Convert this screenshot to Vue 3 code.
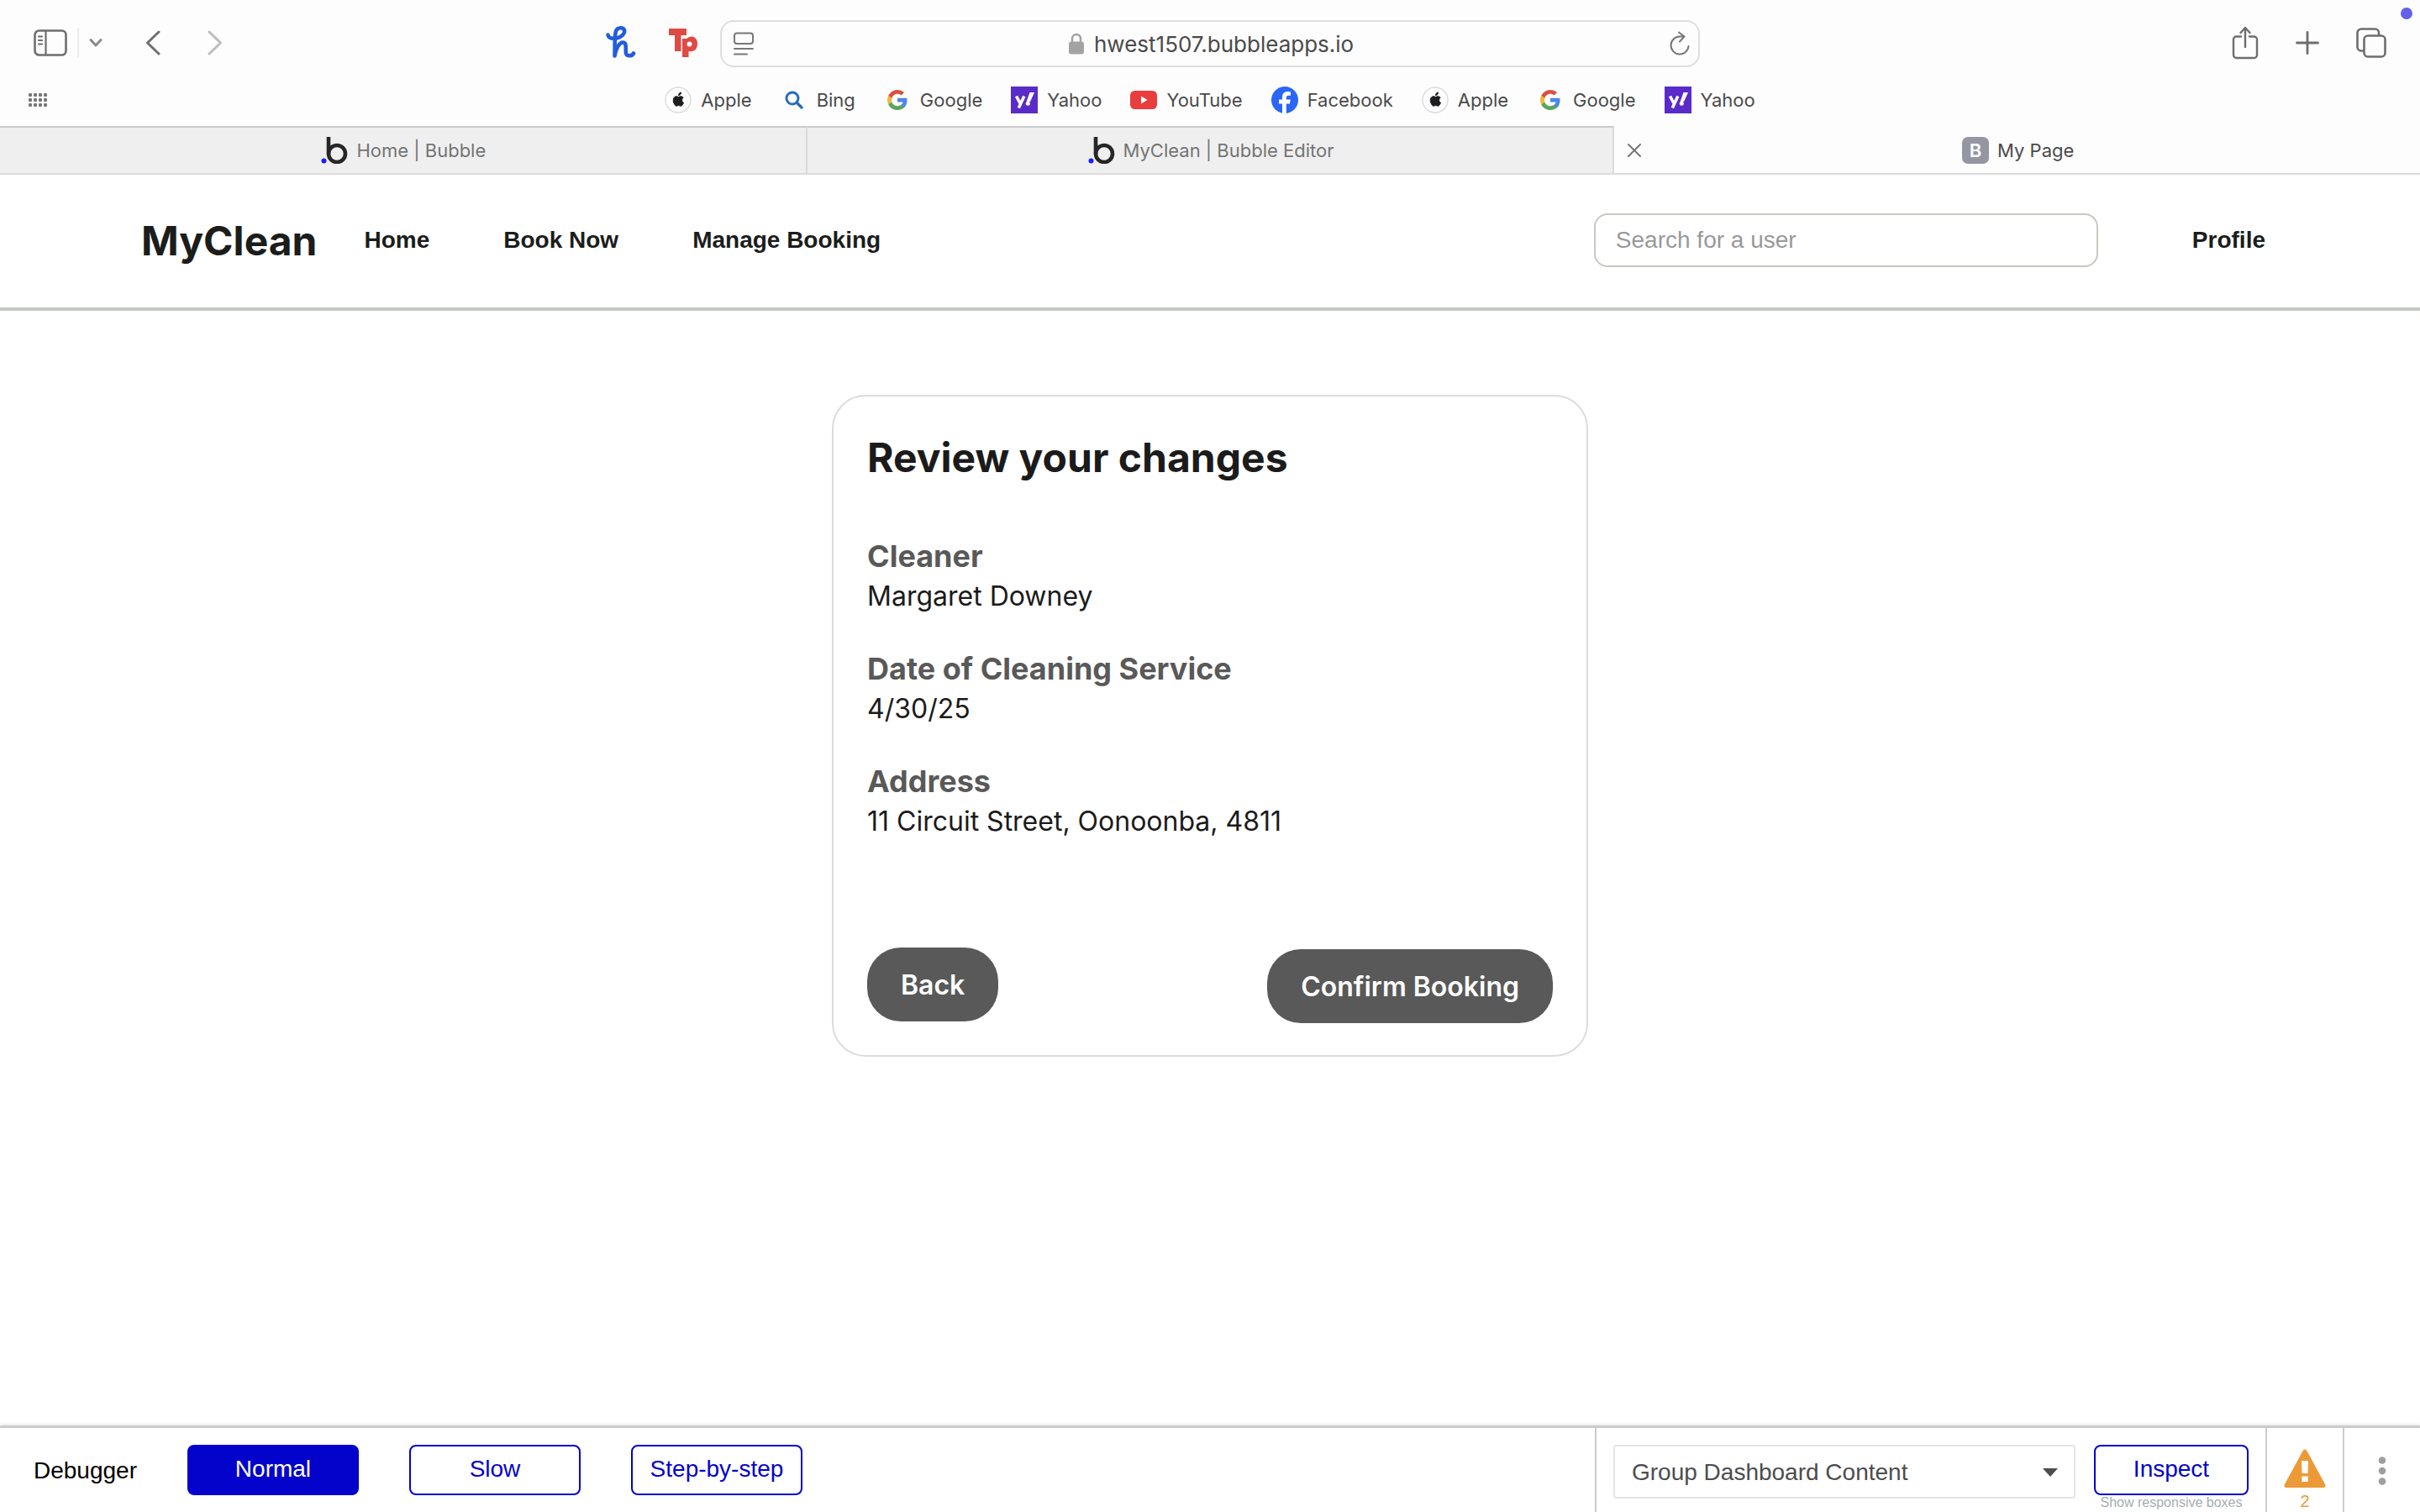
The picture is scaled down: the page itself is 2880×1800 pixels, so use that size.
<script setup>
import { ref } from 'vue'

const bookmarks = [
  { icon: 'apple', label: 'Apple' },
  { icon: 'bing', label: 'Bing' },
  { icon: 'google', label: 'Google' },
  { icon: 'yahoo', label: 'Yahoo' },
  { icon: 'youtube', label: 'YouTube' },
  { icon: 'facebook', label: 'Facebook' },
  { icon: 'apple', label: 'Apple' },
  { icon: 'google', label: 'Google' },
  { icon: 'yahoo', label: 'Yahoo' },
]
const tabs = [
  { title: 'Home | Bubble', active: false },
  { title: 'MyClean | Bubble Editor', active: false },
  { title: 'My Page', active: true },
]
const details = [
  { label: 'Cleaner', value: 'Margaret Downey' },
  { label: 'Date of Cleaning Service', value: '4/30/25' },
  { label: 'Address', value: '11 Circuit Street, Oonoonba, 4811' },
]
const speeds = ['Normal', 'Slow', 'Step-by-step']
const speed = ref('Normal')
const address = ref('hwest1507.bubbleapps.io')
</script>

<template>
  <div class="window">
    <header class="chrome">
      <div class="toolbar">
        <div class="tools-left">
          <button class="icon-btn" aria-label="Show sidebar">
            <svg width="40" height="32" viewBox="0 0 40 32" fill="none" stroke="#6e6e6e" stroke-width="2.6" stroke-linecap="round">
              <rect x="1.5" y="1.5" width="37" height="29" rx="5" />
              <path d="M14.5 2v28M6 8.500h4M6 13h4M6 17.500h4" stroke-width="2.200" />
            </svg>
          </button>
          <span class="tool-divider"></span>
          <button class="icon-btn" aria-label="Tab groups">
            <svg width="16" height="12" viewBox="0 0 16 12" fill="none" stroke="#8a8a8a" stroke-width="3" stroke-linecap="round" stroke-linejoin="round"><path d="M2 2.500l6 6.500 6-6.500" /></svg>
          </button>
          <button class="icon-btn back" aria-label="Back">
            <svg width="20" height="32" viewBox="0 0 20 32" fill="none" stroke="#6e6e6e" stroke-width="3" stroke-linecap="round" stroke-linejoin="round"><path d="M17 3L3.500 16 17 29" /></svg>
          </button>
          <button class="icon-btn forward" aria-label="Forward">
            <svg width="20" height="32" viewBox="0 0 20 32" fill="none" stroke="#bdbdbd" stroke-width="3" stroke-linecap="round" stroke-linejoin="round"><path d="M3 3l13.500 13L3 29" /></svg>
          </button>
          <div class="extensions">
            <button class="icon-btn" aria-label="Honey">
              <svg width="36" height="40" viewBox="0 0 36 40" fill="none" stroke="#245ddb" stroke-width="4.600" stroke-linecap="round" stroke-linejoin="round">
                <path d="M2.500 10.500C3 14 8 16 13 14.500C19 13 23 9 22 5C21 1.500 14 1 12 6C10 12 11 22 10.500 35.500C12 27 16 19 20.500 19.500C25.500 20 23 28 24 32.500C25 36.500 31 36 33 32.500" />
              </svg>
            </button>
            <button class="icon-btn" aria-label="Teleparty">
              <svg width="36" height="36" viewBox="0 0 36 36">
                <path fill="#df4b43" fill-rule="evenodd" d="M1 1h21v8h-6.500v19H8V9H1zM17 13h6v-1c7-4 12 0 12 7 0 7-4 10-10.500 9V35H17zm8.500 3.500a3 3 0 100 6 3 3 0 000-6z" />
              </svg>
            </button>
          </div>
        </div>

        <form class="address" @submit.prevent>
          <button class="icon-btn" type="button" aria-label="Page menu">
            <svg width="24" height="28" viewBox="0 0 24 28" fill="none" stroke="#777" stroke-width="2" stroke-linecap="round"><rect x="1" y="1.500" width="22" height="12.500" rx="3" /><path d="M1 20h22M1 26.500h15" /></svg>
          </button>
          <div class="location">
            <svg width="18" height="26" viewBox="0 0 18 26"><path d="M4 12V7a5 5 0 0110 0v5" fill="none" stroke="#a3a3a3" stroke-width="2.400" /><rect y="10.500" width="18" height="15" rx="3" fill="#a3a3a3" /></svg>
            <input v-model="address" class="url" type="text" aria-label="Address" />
          </div>
          <button class="icon-btn" type="button" aria-label="Reload">
            <svg width="24" height="30" viewBox="0 0 24 30" fill="none" stroke="#777" stroke-width="2" stroke-linecap="round" stroke-linejoin="round"><path d="M22.500 18a10.500 10.500 0 11-10.500-11.500h5M11 1.500l6.500 5-5.500 6" /></svg>
          </button>
        </form>

        <div class="tools-right">
          <button class="icon-btn" aria-label="Share">
            <svg width="32" height="40" viewBox="0 0 32 40" fill="none" stroke="#6e6e6e" stroke-width="2.400" stroke-linecap="round" stroke-linejoin="round"><path d="M11 12.500H5.500a3.500 3.500 0 00-3.500 3.500v18.500A3.500 3.500 0 005.500 38h21a3.500 3.500 0 003.500-3.500V16a3.500 3.500 0 00-3.500-3.500H21M16 25V2M10.500 8L16 2l5.500 6" /></svg>
          </button>
          <button class="icon-btn" aria-label="New tab">
            <svg width="28" height="28" viewBox="0 0 28 28" fill="none" stroke="#6e6e6e" stroke-width="2.800" stroke-linecap="round"><path d="M14 1.500v25M1.500 14h25" /></svg>
          </button>
          <button class="icon-btn" aria-label="Tab overview">
            <svg width="36" height="36" viewBox="0 0 36 36" fill="none" stroke="#6e6e6e" stroke-width="2.600" stroke-linejoin="round"><path d="M9.500 27.500H6A4.500 4.500 0 011.500 23V6A4.500 4.500 0 016 1.500h16.500A4.500 4.500 0 0127 6v3.500" /><rect x="9.500" y="9.500" width="25" height="25" rx="4.500" /></svg>
          </button>
        </div>
        <span class="notice-dot"></span>
      </div>

      <div class="favorites">
        <button class="icon-btn" aria-label="Show all favorites">
          <svg width="24" height="18" viewBox="0 0 24 18" fill="#777">
            <template v-for="r in 3" :key="r"><rect v-for="c in 4" :key="c" :x="c * 6 - 6" :y="r * 6 - 5" width="4" height="4" rx="1" /></template>
          </svg>
        </button>
        <nav class="bookmarks" aria-label="Favorites">
          <a v-for="(b, i) in bookmarks" :key="i" href="#" class="bookmark">
            <svg v-if="b.icon === 'apple'" width="32" height="32" viewBox="0 0 32 32"><circle cx="16" cy="16" r="15" fill="#fff" stroke="#ddd" stroke-width="1.500" /><path fill="#1d1d1f" d="M20.600 16.100c0-1.900 1.500-2.800 1.600-2.900-.9-1.300-2.300-1.500-2.800-1.500-1.200-.1-2.300.7-2.900.7s-1.500-.7-2.500-.7c-1.300 0-2.500.8-3.100 1.900-1.400 2.300-.4 5.800.9 7.700.6.900 1.400 2 2.400 1.900 1 0 1.300-.6 2.500-.6s1.500.6 2.500.6 1.700-.9 2.300-1.800c.8-1.100 1-2.100 1.100-2.100-.1 0-2-.8-2-3.200zM18.700 9.500c.5-.6.900-1.500.8-2.500-.8 0-1.700.5-2.200 1.200-.5.500-.9 1.500-.8 2.300.8.100 1.700-.4 2.200-1z" stroke="#1d1d1f" stroke-width="1" /></svg>
            <svg v-else-if="b.icon === 'bing'" width="32" height="32" viewBox="0 0 32 32" fill="none" stroke="#2b6cb9" stroke-width="3"><circle cx="14" cy="14" r="7" /><path d="M19 19l6 6" stroke-width="3.400" stroke-linecap="round" /></svg>
            <svg v-else-if="b.icon === 'google'" width="32" height="32" viewBox="0 0 32 32"><g transform="translate(4 4)"><path fill="#4f86ec" d="M23.500 12.300c0-.8-.1-1.700-.2-2.500H12v4.700h6.500a5.600 5.600 0 01-2.400 3.600v3.100H20c2.300-2.100 3.500-5.200 3.500-8.900z" /><path fill="#58a65c" d="M12 24c3.200 0 6-1.100 8-2.900l-3.900-3c-1.100.7-2.500 1.200-4.100 1.200-3.100 0-5.800-2.100-6.700-4.900h-4v3.100C3.300 21.400 7.300 24 12 24z" /><path fill="#f0b93a" d="M5.300 14.300a7.200 7.200 0 010-4.600V6.600h-4a12 12 0 000 10.800z" /><path fill="#d9503f" d="M12 4.700c1.800 0 3.400.6 4.600 1.800L20 3.100A12 12 0 001.300 6.600l4 3.100c.9-2.800 3.600-5 6.700-5z" /></g></svg>
            <svg v-else-if="b.icon === 'yahoo'" width="32" height="32" viewBox="0 0 32 32"><path fill="#5a2bc9" d="M0 0h32v32H0z" /><path fill="none" stroke="#fff" stroke-width="3.600" d="M6.500 11.500l4.800 9M15.800 11.500L9.300 25.500" /><path fill="#fff" d="M22.500 7H28l-5 11h-4.400z" /><circle cx="20.300" cy="20.300" r="2.500" fill="#fff" /></svg>
            <svg v-else-if="b.icon === 'youtube'" width="32" height="32" viewBox="0 0 32 32"><rect y="5" width="32" height="22" rx="5.500" fill="#ea3d3d" /><path fill="#fff" d="M13 11.500l7.500 4.500-7.500 4.500z" /></svg>
            <svg v-else width="32" height="32" viewBox="0 0 32 32"><circle cx="16" cy="16" r="16" fill="#2b66f6" /><path fill="#fff" d="M13 32V20.500H9v-5h4V13c0-5 2.500-7 6.500-7 1.500 0 2.700.2 3.500.4v4.300h-2.500c-2 0-2.700.9-2.700 2.600v2.200h5l-.9 5h-4.100V32z" /></svg>
            <span>{{ b.label }}</span>
          </a>
        </nav>
      </div>

      <div class="tabs" role="tablist">
        <div v-for="t in tabs" :key="t.title" class="tab" :class="{ active: t.active }" role="tab" :aria-selected="t.active">
          <button v-if="t.active" class="icon-btn close" aria-label="Close tab">
            <svg width="16" height="16" viewBox="0 0 16 16" fill="none" stroke="#777" stroke-width="2" stroke-linecap="round"><path d="M1 1l14 14M15 1L1 15" /></svg>
          </button>
          <span v-if="t.active" class="favicon">B</span>
          <svg v-else width="32" height="32" viewBox="0 0 32 32"><circle cx="3.500" cy="28.500" r="3" fill="#1522ff" /><path d="M9 0v20" stroke="#262626" stroke-width="4.600" fill="none" /><circle cx="19" cy="20" r="10" fill="none" stroke="#262626" stroke-width="4.600" /></svg>
          <span>{{ t.title }}</span>
        </div>
      </div>
    </header>

    <div class="site-header">
      <a href="#" class="brand">MyClean</a>
      <nav class="site-nav">
        <a href="#">Home</a>
        <a href="#">Book Now</a>
        <a href="#">Manage Booking</a>
      </nav>
      <input class="search" type="text" placeholder="Search for a user" aria-label="Search for a user" />
      <a href="#" class="profile">Profile</a>
    </div>

    <main class="content">
      <section class="card">
        <h1>Review your changes</h1>
        <dl>
          <div v-for="d in details" :key="d.label" class="detail">
            <dt>{{ d.label }}</dt>
            <dd>{{ d.value }}</dd>
          </div>
        </dl>
        <div class="actions">
          <button class="pill">Back</button>
          <button class="pill confirm">Confirm Booking</button>
        </div>
      </section>
    </main>

    <footer class="debugger">
      <div class="speed">
        <span class="debug-label">Debugger</span>
        <button v-for="s in speeds" :key="s" class="debug-btn" :class="{ on: s === speed }" @click="speed = s">{{ s }}</button>
      </div>
      <div class="inspector">
        <div class="select-wrap">
          <select aria-label="Element">
            <option>Group Dashboard Content</option>
          </select>
          <svg class="caret" width="18" height="10" viewBox="0 0 18 10"><path fill="#4d4d4d" d="M0 0h18L9 10z" /></svg>
        </div>
        <div class="inspect">
          <button class="debug-btn">Inspect</button>
          <a href="#" class="boxes">Show responsive boxes</a>
        </div>
      </div>
      <button class="issues" aria-label="2 issues">
        <svg width="50" height="46" viewBox="0 0 50 46"><path fill="#ec9a37" stroke="#ec9a37" stroke-width="5" stroke-linejoin="round" d="M25 3l22 40.500H3z" /><path fill="#fff" d="M21 14h8l-.5 15h-7zM21.300 32.500h7.400V39h-7.400z" /></svg>
        <span>2</span>
      </button>
      <button class="more" aria-label="More options">
        <svg width="10" height="34" viewBox="0 0 10 34" fill="#9f9f9f"><circle cx="5" cy="4.500" r="4.300" /><circle cx="5" cy="17" r="4.300" /><circle cx="5" cy="29.500" r="4.300" /></svg>
      </button>
    </footer>
  </div>
</template>

<style>
body {
  margin: 0;
  background: #fff;
}
</style>

<style scoped>
* {
  box-sizing: border-box;
}
.window {
  display: flex;
  flex-direction: column;
  min-height: 100vh;
  font-family: 'Liberation Sans', Arial, sans-serif;
  font-size: 28px;
  background: #fff;
}
button,
input,
select {
  font: inherit;
}
a {
  color: inherit;
  text-decoration: none;
}
svg {
  display: block;
  flex: none;
}

/* Browser chrome */
.chrome {
  background: #fdfdfd;
  font-family: Inter, sans-serif;
  font-size: 22px;
  color: #4a4a4a;
}
.icon-btn {
  display: flex;
  align-items: center;
  padding: 0;
  border: 0;
  background: none;
}
.toolbar {
  position: relative;
  display: grid;
  grid-template-columns: 1fr minmax(0, 1166px) 1fr;
  padding: 24px 40px 0;
}
.tools-left,
.tools-right {
  display: flex;
  align-items: center;
  height: 54px;
}
.tool-divider {
  width: 2px;
  height: 36px;
  margin: 0 12px;
  background: #ececec;
}
.back {
  margin-left: 50px;
}
.forward {
  margin-left: 54px;
}
.extensions {
  display: flex;
  align-items: center;
  gap: 38px;
  margin: 0 26px 0 auto;
}
.tools-right {
  gap: 44px;
  justify-content: flex-end;
}
.address {
  display: flex;
  align-items: center;
  justify-content: space-between;
  height: 56px;
  padding: 0 10px 0 14px;
  border: 2px solid #dedede;
  border-radius: 16px;
}
.location {
  display: flex;
  align-items: center;
  gap: 12px;
}
.url {
  width: 310px;
  padding: 0;
  border: 0;
  outline: 0;
  background: none;
  font-size: 26px;
  color: #4a4a4a;
}
.notice-dot {
  position: absolute;
  top: 9px;
  right: 9px;
  width: 14px;
  height: 14px;
  border-radius: 50%;
  background: #6360ea;
}
.favorites {
  display: grid;
  grid-template-columns: 1fr auto 1fr;
  align-items: center;
  height: 70px;
  padding: 10px 34px 2px;
}
.bookmarks {
  display: flex;
  gap: 34px;
}
.bookmark {
  display: flex;
  align-items: center;
  gap: 11px;
}
.tabs {
  display: flex;
  height: 58px;
  border-bottom: 2px solid #dcdcdc;
}
.tab {
  position: relative;
  display: flex;
  flex: 1;
  align-items: center;
  justify-content: center;
  gap: 10px;
  padding-left: 2px;
  border-top: 2px solid #cacaca;
  border-right: 2px solid #dadada;
  background: #efefef;
  color: #747474;
}
.tab.active {
  border-right: 0;
  border-top-color: transparent;
  background: none;
  color: #4a4a4a;
}
.close {
  position: absolute;
  left: 16px;
}
.favicon {
  width: 32px;
  height: 32px;
  border-radius: 7px;
  background: #9596a3;
  color: #fff;
  font-weight: 600;
  line-height: 32px;
  text-align: center;
}

/* Site header */
.site-header {
  display: flex;
  align-items: center;
  height: 162px;
  padding: 0 184px 2px 168px;
  border-bottom: 4px solid #c4c9c1;
  font-weight: 700;
  color: #1b1d1b;
}
.brand {
  font-family: Inter, sans-serif;
  font-size: 48px;
}
.site-nav {
  display: flex;
  flex: 1;
  gap: 88px;
  margin-left: 56px;
}
.search {
  width: 600px;
  height: 64px;
  padding: 0 24px;
  border: 2px solid #c4c9c1;
  border-radius: 16px;
  background: #fff;
  font-weight: 400;
}
.search::placeholder {
  color: #999;
  opacity: 1;
}
.profile {
  margin-left: 112px;
}

/* Review card */
.content {
  display: flex;
  flex: 1;
  align-items: flex-start;
  justify-content: center;
  padding: 100px 40px 40px;
  font-family: Inter, sans-serif;
}
.card {
  width: 900px;
  padding: 40px 40px 38px;
  border: 2px solid #dcdcdc;
  border-radius: 40px;
  color: #1b1b1b;
}
h1 {
  margin: 0;
  font-size: 48px;
  line-height: 66px;
}
dl {
  display: flex;
  flex-direction: column;
  gap: 38px;
  margin: 60px 0 126px;
}
dt {
  font-size: 36px;
  font-weight: 700;
  line-height: 48px;
  color: #595959;
}
dd {
  margin: 0;
  font-size: 32px;
  line-height: 48px;
}
.actions {
  display: flex;
  align-items: flex-start;
  justify-content: space-between;
  height: 90px;
}
.pill {
  height: 88px;
  padding: 0 40px;
  border: 0;
  border-radius: 40px;
  background: #595959;
  color: #fff;
  font-size: 32px;
  font-weight: 600;
}
.confirm {
  align-self: flex-end;
}

/* Debugger bar */
.debugger {
  display: flex;
  height: 103px;
  border-top: 3px solid #ccc;
  box-shadow: 0 -1px 4px rgba(0, 0, 0, 0.12);
  background: #fff;
}
.speed {
  display: flex;
  flex: 1;
  align-items: flex-start;
  gap: 60px;
  padding: 20px 40px;
}
.debug-label {
  line-height: 62px;
}
.debug-btn {
  width: 204px;
  height: 60px;
  padding: 0 0 2px;
  border: 2px solid #0205d3;
  border-radius: 8px;
  background: #fff;
  color: #0303cc;
  border-color: #0303cc;
}
.debug-btn.on {
  background: #0303cc;
  color: #fff;
}
.inspector {
  display: flex;
  gap: 22px;
  padding: 20px 20px 0;
  border-left: 2px solid #ccc;
}
.select-wrap {
  position: relative;
}
select {
  width: 550px;
  height: 64px;
  padding: 0 20px;
  border: 2px solid #e5e5e5;
  border-radius: 4px;
  appearance: none;
  background: #fff;
  color: #4d4d4d;
}
.caret {
  position: absolute;
  top: 28px;
  right: 21px;
  pointer-events: none;
}
.inspect {
  display: flex;
  flex-direction: column;
  align-items: center;
}
.inspect .debug-btn {
  width: 184px;
}
.boxes {
  font-size: 16px;
  line-height: 18px;
  color: #a3adb3;
}
.issues,
.more {
  padding: 0;
  border: 0;
  border-left: 2px solid #ccc;
  background: none;
}
.issues {
  display: flex;
  flex-direction: column;
  align-items: center;
  width: 92px;
  padding-top: 25px;
  font-size: 20px;
  line-height: 32px;
  color: #ec9a37;
}
.more {
  display: flex;
  justify-content: center;
  width: 92px;
  padding-top: 34px;
}
</style>
